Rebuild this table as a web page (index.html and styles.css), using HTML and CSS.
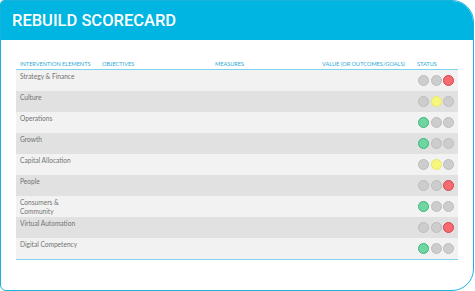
FILE: index.html
```html
<!DOCTYPE html>
<html>
<head>
<meta charset="utf-8">
<link rel="stylesheet" href="styles.css">
</head>
<body>
<div class="card">
  <div class="banner"><h1 class="title">REBUILD SCORECARD</h1></div>
  <div class="table">
    <div class="row head">
      <div class="cell first">INTERVENTION ELEMENTS</div>
      <div class="cell">OBJECTIVES</div>
      <div class="cell">MEASURES</div>
      <div class="cell">VALUE (OR OUTCOMES/GOALS)</div>
      <div class="cell">STATUS</div>
    </div>
    <div class="row light">
      <div class="cell first">Strategy &amp; Finance</div><div class="cell"></div><div class="cell"></div><div class="cell"></div>
      <div class="cell status"><span class="dot"></span><span class="dot"></span><span class="dot red"></span></div>
    </div>
    <div class="row dark">
      <div class="cell first">Culture</div><div class="cell"></div><div class="cell"></div><div class="cell"></div>
      <div class="cell status"><span class="dot"></span><span class="dot yellow"></span><span class="dot"></span></div>
    </div>
    <div class="row light">
      <div class="cell first">Operations</div><div class="cell"></div><div class="cell"></div><div class="cell"></div>
      <div class="cell status"><span class="dot green"></span><span class="dot"></span><span class="dot"></span></div>
    </div>
    <div class="row dark">
      <div class="cell first">Growth</div><div class="cell"></div><div class="cell"></div><div class="cell"></div>
      <div class="cell status"><span class="dot green"></span><span class="dot"></span><span class="dot"></span></div>
    </div>
    <div class="row light">
      <div class="cell first">Capital Allocation</div><div class="cell"></div><div class="cell"></div><div class="cell"></div>
      <div class="cell status"><span class="dot"></span><span class="dot yellow"></span><span class="dot"></span></div>
    </div>
    <div class="row dark">
      <div class="cell first">People</div><div class="cell"></div><div class="cell"></div><div class="cell"></div>
      <div class="cell status"><span class="dot"></span><span class="dot"></span><span class="dot red"></span></div>
    </div>
    <div class="row light">
      <div class="cell first">Consumers &amp;<br>Community</div><div class="cell"></div><div class="cell"></div><div class="cell"></div>
      <div class="cell status"><span class="dot green"></span><span class="dot"></span><span class="dot"></span></div>
    </div>
    <div class="row dark">
      <div class="cell first">Virtual Automation</div><div class="cell"></div><div class="cell"></div><div class="cell"></div>
      <div class="cell status"><span class="dot"></span><span class="dot"></span><span class="dot red"></span></div>
    </div>
    <div class="row light last">
      <div class="cell first">Digital Competency</div><div class="cell"></div><div class="cell"></div><div class="cell"></div>
      <div class="cell status"><span class="dot green"></span><span class="dot"></span><span class="dot"></span></div>
    </div>
  </div>
</div>
</body>
</html>
```

FILE: styles.css
```css
html, body {
  margin: 0;
  padding: 0;
  background: #ffffff;
}
.card {
  box-sizing: border-box;
  width: 474px;
  height: 291px;
  border: 1.5px solid #1ab2dc;
  border-radius: 4px 22px 22px 6px;
  overflow: hidden;
  background: #ffffff;
}
.banner {
  height: 39px;
  background: #00b5e2;
  display: flex;
  align-items: center;
  padding-left: 11px;
}
.title {
  margin: 0;
  color: #ffffff;
  font-family: Roboto, "Open Sans", sans-serif;
  font-weight: 500;
  font-size: 16.5px;
  letter-spacing: 0;
}
.table {
  margin: 19px 0 0 15px;
  width: 442px;
  border-bottom: 1px solid #7fd3ec;
}
.row {
  display: grid;
  grid-template-columns: 86px 113px 107px 95px 41px;
  height: 21px;
  font-family: Lato, "Open Sans", sans-serif;
  font-size: 6.6px;
  line-height: 9px;
  color: #727272;
}
.row.head {
  height: 9px;
  color: #2aa9d6;
  font-size: 5.6px;
  line-height: 9px;
  border-bottom: 1px solid #7fd3ec;
  padding-bottom: 1px;
}
.cell {
  padding-top: 2px;
  white-space: nowrap;
}
.head .cell {
  padding-top: 0;
}
.cell.first {
  padding-left: 4px;
}
.light { background: #f2f2f2; }
.dark { background: #e1e1e1; }
.status {
  padding-top: 0;
  display: flex;
  align-items: center;
  gap: 1.5px;
  padding-left: 1px;
}
.dot {
  box-sizing: border-box;
  width: 11px;
  height: 11px;
  border-radius: 50%;
  background: #cdcdcd;
  border: 1px solid #bdbdbd;
}
.dot.red { background: #f56b6f; border-color: #d9434b; }
.dot.yellow { background: #f7f77d; border-color: #e9e968; }
.dot.green { background: #6fd6a2; border-color: #3db67a; }
```
